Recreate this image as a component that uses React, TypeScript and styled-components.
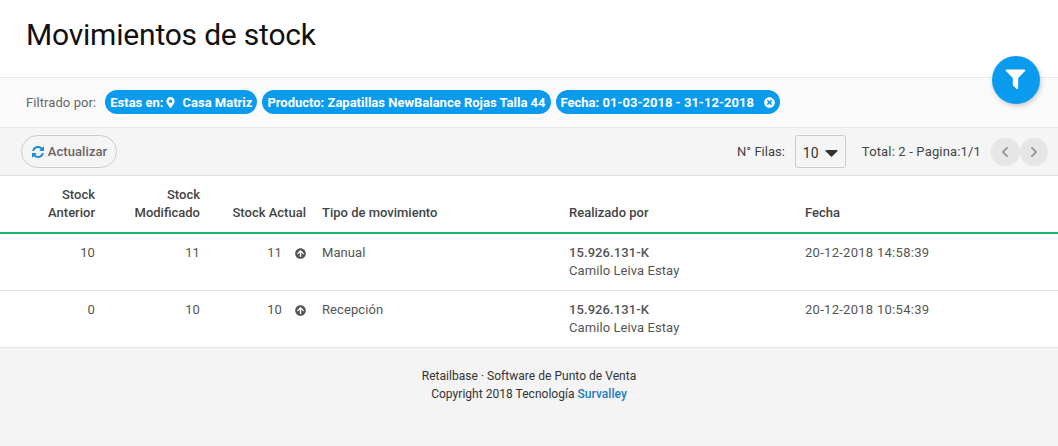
import { FaArrowCircleUp, FaCaretDown, FaChevronLeft, FaChevronRight, FaMapMarkerAlt, FaTimesCircle } from "react-icons/fa";
import styled, { createGlobalStyle } from "styled-components";

const rows = [
  { before: 10, changed: 11, current: 11, type: "Manual", date: "20-12-2018 14:58:39" },
  { before: 0, changed: 10, current: 10, type: "Recepción", date: "20-12-2018 10:54:39" },
];

function FilterIcon() {
  return (
    <svg width="25" height="25" viewBox="0 0 1792 1792" fill="currentColor">
      <path d="M1595 295q17 41-14 70l-493 493v742q0 42-39 59-13 5-25 5-27 0-45-19l-256-256q-19-19-19-45v-486l-493-493q-31-29-14-70 17-39 59-39h1280q42 0 59 39z" />
    </svg>
  );
}

function RefreshIcon() {
  return (
    <svg width="14" height="14" viewBox="0 0 1792 1792" fill="#1a8fd0">
      <path d="M1639 1056q0 5-1 7-64 268-268 434.5t-478 166.5q-146 0-282.5-55t-243.5-157l-129 129q-19 19-45 19t-45-19-19-45v-448q0-26 19-45t45-19h448q26 0 45 19t19 45-19 45l-137 137q71 66 161 102t187 36q134 0 250-65t186-179q11-17 53-117 8-23 30-23h192q13 0 22.5 9.5t9.5 22.5zm25-800v448q0 26-19 45t-45 19h-448q-26 0-45-19t-19-45 19-45l138-138q-148-137-349-137-134 0-250 65t-186 179q-11 17-53 117-8 23-30 23h-199q-13 0-22.5-9.5t-9.5-22.5v-7q65-268 270-434.5t480-166.5q146 0 284 55.5t245 156.5l130-129q19-19 45-19t45 19 19 45z" />
    </svg>
  );
}

function App() {
  return (
    <Page>
      <GlobalStyle />
      <Header>
        <Title>Movimientos de stock</Title>
      </Header>
      <FilterFab>
        <FilterIcon />
      </FilterFab>
      <FilterBar>
        <FilterLabel>Filtrado por:</FilterLabel>
        <Chip>
          Estas en:
          <ChipPin>
            <FaMapMarkerAlt size={11} />
          </ChipPin>
          Casa Matriz
        </Chip>
        <Chip>Producto: Zapatillas NewBalance Rojas Talla 44</Chip>
        <Chip>
          Fecha: 01-03-2018 - 31-12-2018
          <ChipClose>
            <FaTimesCircle size={11} />
          </ChipClose>
        </Chip>
      </FilterBar>
      <Toolbar>
        <RefreshButton>
          <RefreshIcon />
          Actualizar
        </RefreshButton>
        <Pager>
          <PagerLabel>N° Filas:</PagerLabel>
          <RowsSelect>
            10 <FaCaretDown size={21} color="#333" />
          </RowsSelect>
          <PagerTotal>Total: 2 - Pagina:1/1</PagerTotal>
          <PagerButtons>
            <PagerButton>
              <FaChevronLeft size={12} />
            </PagerButton>
            <PagerButton>
              <FaChevronRight size={12} />
            </PagerButton>
          </PagerButtons>
        </Pager>
      </Toolbar>
      <Table>
        <thead>
          <tr>
            <HeadCell $right $width={95}>
              Stock
              <br />
              Anterior
            </HeadCell>
            <HeadCell $right $width={105}>
              Stock
              <br />
              Modificado
            </HeadCell>
            <HeadCell $right $width={106}>
              Stock Actual
            </HeadCell>
            <HeadCell $width={247}>Tipo de movimiento</HeadCell>
            <HeadCell $width={236}>Realizado por</HeadCell>
            <HeadCell>Fecha</HeadCell>
          </tr>
        </thead>
        <tbody>
          {rows.map((row) => (
            <tr key={row.date}>
              <Cell $right>{row.before}</Cell>
              <Cell $right>{row.changed}</Cell>
              <Cell $right>
                <CurrentStock>
                  {row.current}
                  <FaArrowCircleUp size={11} color="#555" />
                </CurrentStock>
              </Cell>
              <Cell>{row.type}</Cell>
              <Cell>
                <UserId>15.926.131-K</UserId>
                <br />
                Camilo Leiva Estay
              </Cell>
              <Cell>
                <DateText>{row.date}</DateText>
              </Cell>
            </tr>
          ))}
        </tbody>
      </Table>
      <Footer>
        Retailbase · Software de Punto de Venta
        <br />
        Copyright 2018 Tecnología <FooterLink>Survalley</FooterLink>
      </Footer>
    </Page>
  );
}

const GlobalStyle = createGlobalStyle`
  html, body {
    margin: 0;
    padding: 0;
    background: #fff;
  }
`;

const Page = styled.div`
  position: relative;
  width: 1058px;
  height: 446px;
  overflow: hidden;
  display: flex;
  flex-direction: column;
  font-family: Roboto, "Liberation Sans", sans-serif;
  font-size: 13px;
  letter-spacing: 0.08px;
  color: #555;
`;

const Header = styled.div`
  height: 77px;
  flex: none;
  padding-left: 26px;
  border-bottom: 1px solid #e8e8e8;
`;

const Title = styled.h1`
  margin: 0;
  padding-top: 16px;
  font-size: 30px;
  line-height: 38px;
  font-weight: 400;
  letter-spacing: -0.2px;
  color: #111;
`;

const FilterFab = styled.div`
  position: absolute;
  top: 56px;
  left: 992px;
  width: 48px;
  height: 48px;
  padding: 0 2px 3px 0;
  box-sizing: border-box;
  border-radius: 50%;
  background: #0a9bee;
  color: #fff;
  display: flex;
  align-items: center;
  justify-content: center;
  box-shadow: 1px 2px 5px rgba(0, 0, 0, 0.2);
`;

const FilterBar = styled.div`
  height: 50px;
  flex: none;
  box-sizing: border-box;
  display: flex;
  align-items: center;
  gap: 5px;
  padding: 0 0 1px 26px;
  background: #fafafa;
  border-bottom: 1px solid #e8e8e8;
`;

const FilterLabel = styled.span`
  margin-right: 4px;
  color: #666;
`;

const Chip = styled.span`
  height: 24px;
  display: inline-flex;
  align-items: center;
  padding: 0 5px;
  border-radius: 12px;
  background: #0a9bee;
  color: #fff;
  font-weight: 700;
  letter-spacing: 0;
  white-space: pre;
`;

const ChipPin = styled.span`
  display: inline-flex;
  margin: 0 7px 0 1px;
`;

const ChipClose = styled.span`
  display: inline-flex;
  margin-left: 10px;
`;

const Toolbar = styled.div`
  height: 48px;
  flex: none;
  box-sizing: border-box;
  display: flex;
  align-items: center;
  justify-content: space-between;
  padding: 0 10px 0 21px;
  background: #f5f5f5;
  border-bottom: 1px solid #e0e0e0;
`;

const RefreshButton = styled.div`
  width: 96px;
  height: 33px;
  box-sizing: border-box;
  display: flex;
  align-items: center;
  justify-content: center;
  gap: 3px;
  border: 1px solid #ccc;
  border-radius: 17px;
  color: #666;
  font-weight: 500;
`;

const Pager = styled.div`
  display: flex;
  align-items: center;
`;

const PagerLabel = styled.span`
  color: #444;
  margin-right: 10px;
  letter-spacing: 0;
`;

const RowsSelect = styled.div`
  width: 51px;
  height: 33px;
  box-sizing: border-box;
  display: flex;
  align-items: center;
  justify-content: space-between;
  padding: 2px 3px 0 7px;
  border: 1px solid #ccc;
  border-radius: 3px;
  font-size: 14px;
  color: #333;
`;

const PagerTotal = styled.span`
  margin: 0 10px 0 16px;
  letter-spacing: 0.16px;
  color: #444;
`;

const PagerButtons = styled.div`
  display: flex;
`;

const PagerButton = styled.div`
  width: 28.5px;
  height: 28px;
  border-radius: 50%;
  background: #e6e6e6;
  color: #999;
  display: flex;
  align-items: center;
  justify-content: center;
`;

const Table = styled.table`
  width: 1058px;
  flex: none;
  table-layout: fixed;
  border-collapse: separate;
  border-spacing: 0;
`;

const HeadCell = styled.th<{ $right?: boolean; $width?: number }>`
  height: 58px;
  box-sizing: border-box;
  width: ${(p) => (p.$width ? `${p.$width}px` : "auto")};
  padding: 0 0 10px ${(p) => (p.$right ? 0 : "16px")};
  vertical-align: bottom;
  text-align: ${(p) => (p.$right ? "right" : "left")};
  font-weight: 500;
  letter-spacing: 0;
  line-height: 18px;
  color: #444;
  border-bottom: 2px solid #1fb56f;
`;

const Cell = styled.td<{ $right?: boolean }>`
  height: 57px;
  box-sizing: border-box;
  padding: 10px 0 0 ${(p) => (p.$right ? 0 : "16px")};
  vertical-align: top;
  text-align: ${(p) => (p.$right ? "right" : "left")};
  line-height: 18px;
  color: #555;
  border-bottom: 1px solid #e4e4e4;
`;

const CurrentStock = styled.span`
  display: inline-flex;
  align-items: center;
  gap: 13px;
`;

const UserId = styled.span`
  font-weight: 500;
`;

const DateText = styled.span`
  letter-spacing: 0.28px;
`;

const Footer = styled.div`
  flex: 1;
  padding-top: 19px;
  background: #f4f4f4;
  text-align: center;
  font-size: 12px;
  letter-spacing: 0.03px;
  line-height: 18px;
  color: #333;
`;

const FooterLink = styled.span`
  color: #1a7cc4;
  font-weight: 500;
`;

export default App;
